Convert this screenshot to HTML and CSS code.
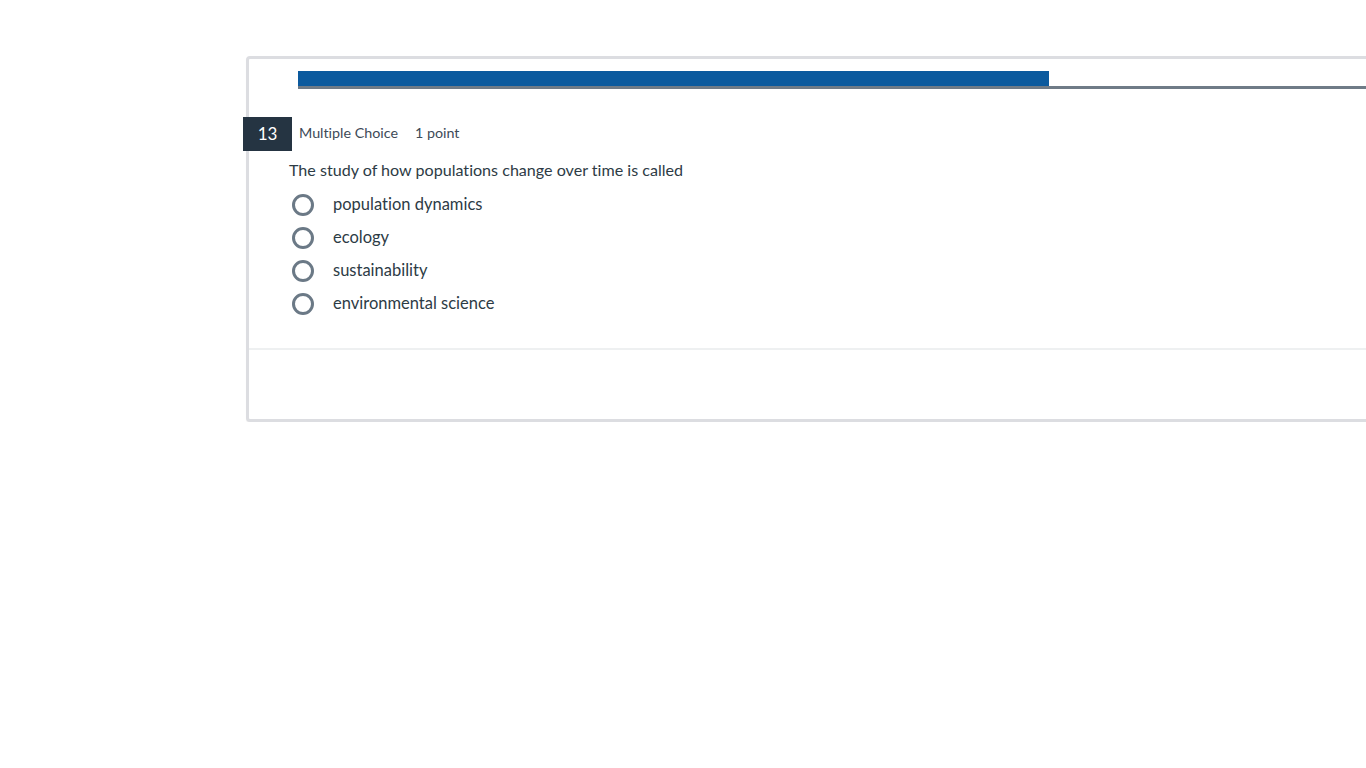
FILE: index.html
```html
<!DOCTYPE html>
<html lang="en">
<head>
<meta charset="utf-8">
<title>Quiz question</title>
<link rel="stylesheet" href="styles.css">
</head>
<body>
  <div class="page">
    <section class="card">
      <div class="progress">
        <div class="progress-fill"></div>
      </div>
      <div class="question-head">
        <span class="qnum">13</span>
        <span class="qtype">Multiple Choice</span>
        <span class="qpoints">1 point</span>
      </div>
      <div class="question-body">
        <p class="prompt">The study of how populations change over time is called</p>
        <ul class="options">
          <li class="option"><span class="radio"></span><span class="label">population dynamics</span></li>
          <li class="option"><span class="radio"></span><span class="label">ecology</span></li>
          <li class="option"><span class="radio"></span><span class="label">sustainability</span></li>
          <li class="option"><span class="radio"></span><span class="label">environmental science</span></li>
        </ul>
      </div>
      <div class="card-footer"></div>
    </section>
  </div>
</body>
</html>
```

FILE: styles.css
```css
html, body {
  margin: 0;
  padding: 0;
  background: #ffffff;
  overflow: hidden;
}

body {
  font-family: Lato, "Liberation Sans", sans-serif;
  font-variant-ligatures: none;
  color: #2d3b45;
}

.page {
  padding: 56px 0 0 246px;
}

.card {
  width: 1300px;
  border: 3px solid #dcdde1;
  border-radius: 4px;
  box-shadow: 0 1px 1px rgba(0, 0, 0, 0.06);
  background: #ffffff;
}

.progress {
  margin: 12px 0 0 49px;
  height: 15px;
  border-bottom: 3px solid #6f7b87;
}

.progress-fill {
  width: 751px;
  height: 15px;
  background: #0b5a9e;
}

.question-head {
  display: flex;
  align-items: center;
  margin: 28px 0 0 -6px;
  height: 34px;
}

.qnum {
  width: 49px;
  height: 34px;
  display: flex;
  align-items: center;
  justify-content: center;
  background: #253442;
  color: #ffffff;
  font-size: 17px;
  padding-bottom: 2px;
  box-sizing: border-box;
}

.qtype {
  margin-left: 7px;
  font-size: 14.3px;
  color: #3d4a57;
  padding-bottom: 3px;
}

.qpoints {
  margin-left: 17px;
  font-size: 14.3px;
  color: #3d4a57;
  padding-bottom: 3px;
}

.question-body {
  padding-left: 40px;
}

.prompt {
  margin: 7px 0 0;
  font-size: 16.1px;
  line-height: 24px;
  color: #2d3b45;
}

.options {
  list-style: none;
  margin: 6px 0 0;
  padding: 0;
}

.option {
  display: flex;
  align-items: center;
  height: 33px;
}

.radio {
  width: 22px;
  height: 22px;
  box-sizing: border-box;
  border: 3px solid #6b7986;
  border-radius: 50%;
  margin-left: 3px;
}

.label {
  margin-left: 19px;
  font-size: 16.5px;
  color: #2d3b45;
  padding-bottom: 2px;
}

.card-footer {
  margin-top: 28px;
  height: 69px;
  border-top: 2px solid #eef0f1;
}
```
